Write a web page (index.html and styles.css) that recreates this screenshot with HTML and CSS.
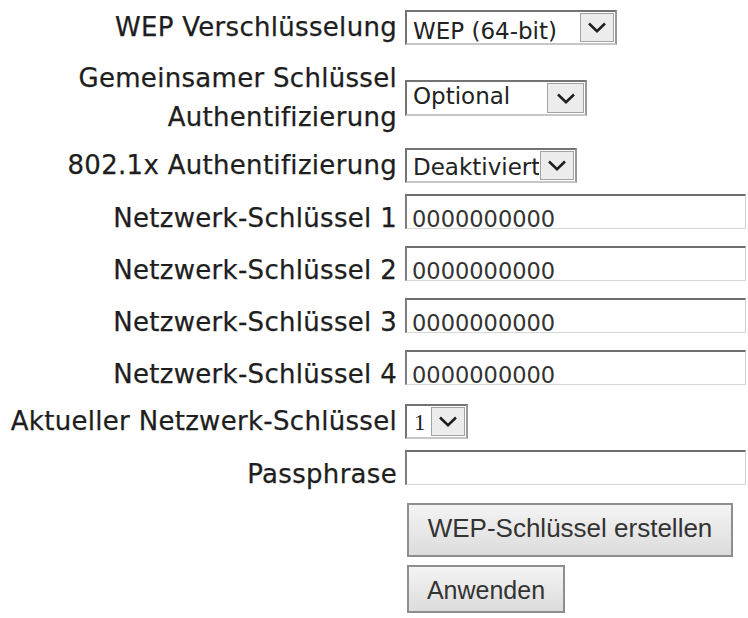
FILE: index.html
```html
<!DOCTYPE html>
<html lang="de">
<head>
<meta charset="utf-8">
<title>WEP</title>
<link rel="stylesheet" href="styles.css">
</head>
<body>
<form class="form">
  <div class="row">
    <label class="lbl">WEP Verschlüsselung</label>
    <div class="sel sel-enc"><span class="val val-enc">WEP (64-bit)</span><span class="arrow"><svg width="18" height="11" viewBox="0 0 18 11"><polyline points="1,1.5 9,9.2 17,1.5" fill="none" stroke="#1e1e1e" stroke-width="2.5"/></svg></span></div>
  </div>
  <div class="row row-tall">
    <label class="lbl">Gemeinsamer Schlüssel<br>Authentifizierung</label>
    <div class="sel sel-auth"><span class="val val-auth">Optional</span><span class="arrow arrow-wide"><svg width="18" height="11" viewBox="0 0 18 11"><polyline points="1,1.5 9,9.2 17,1.5" fill="none" stroke="#1e1e1e" stroke-width="2.5"/></svg></span></div>
  </div>
  <div class="row row-dot1x">
    <label class="lbl">802.1x Authentifizierung</label>
    <div class="sel sel-dot1x"><span class="val val-dot1x">Deaktiviert</span><span class="arrow"><svg width="18" height="11" viewBox="0 0 18 11"><polyline points="1,1.5 9,9.2 17,1.5" fill="none" stroke="#1e1e1e" stroke-width="2.5"/></svg></span></div>
  </div>
  <div class="row row-input row-first">
    <label class="lbl">Netzwerk-Schlüssel 1</label>
    <input class="txt" type="text" value="0000000000">
  </div>
  <div class="row row-input">
    <label class="lbl">Netzwerk-Schlüssel 2</label>
    <input class="txt" type="text" value="0000000000">
  </div>
  <div class="row row-input">
    <label class="lbl">Netzwerk-Schlüssel 3</label>
    <input class="txt" type="text" value="0000000000">
  </div>
  <div class="row row-input">
    <label class="lbl">Netzwerk-Schlüssel 4</label>
    <input class="txt" type="text" value="0000000000">
  </div>
  <div class="row">
    <label class="lbl">Aktueller Netzwerk-Schlüssel</label>
    <div class="sel sel-key"><span class="val val-key">1</span><span class="arrow"><svg width="18" height="11" viewBox="0 0 18 11"><polyline points="1,1.5 9,9.2 17,1.5" fill="none" stroke="#1e1e1e" stroke-width="2.5"/></svg></span></div>
  </div>
  <div class="row row-input row-pass">
    <label class="lbl">Passphrase</label>
    <input class="txt" type="text" value="">
  </div>
  <div class="row row-btn row-gen">
    <button class="btn btn-gen" type="button">WEP-Schlüssel erstellen</button>
  </div>
  <div class="row row-btn">
    <button class="btn btn-apply" type="button">Anwenden</button>
  </div>
</form>
</body>
</html>
```
FILE: styles.css
```css
html, body {
  margin: 0;
  padding: 0;
  background: #ffffff;
}

body {
  font-family: "DejaVu Sans", Verdana, sans-serif;
  color: #222222;
}

.form {
  display: flex;
  flex-direction: column;
  gap: 8px;
  padding-top: 8px;
  margin: 0;
}

.row {
  display: flex;
  align-items: center;
  gap: 8px;
}

.row-input {
  align-items: baseline;
}

.row-tall { margin-top: 4px; }
.row-dot1x { margin-top: 1px; }
.row-first { margin-top: 1px; }
.row-pass { margin-top: 1px; }
.row-gen { margin-top: 1px; }

.row-btn {
  padding-left: 405px;
}

.lbl {
  width: 397px;
  flex: none;
  text-align: right;
  font-size: 26px;
  line-height: 39px;
  letter-spacing: 0.3px;
  color: #1e1e1e;
  -webkit-text-stroke: 0.25px #1e1e1e;
  white-space: nowrap;
}

.sel {
  display: flex;
  align-items: stretch;
  flex: none;
  height: 35px;
  box-sizing: border-box;
  border-style: solid;
  border-width: 2px;
  border-color: #737373 #9a9a9a #c6c6c6 #737373;
  background: #ffffff;
}

.sel-enc { width: 212px; }
.sel-auth { width: 182px; height: 36px; }
.sel-dot1x { width: 172px; }
.sel-key { width: 63px; }

.val {
  flex: 1;
  padding: 6px 0 0 6px;
  font-size: 23px;
  line-height: 24px;
  color: #222222;
  white-space: nowrap;
  overflow: hidden;
}

.val-enc { padding-top: 7px; }
.val-auth { padding-top: 2px; }
.val-dot1x { padding-top: 5px; padding-left: 6px; }
.val-key {
  font-family: "Liberation Serif", "Times New Roman", serif;
  padding-left: 7px;
  padding-top: 5px;
}

.arrow {
  flex: none;
  width: 34px;
  box-sizing: border-box;
  margin: 1px;
  border: 1px solid #a2a2a2;
  background: #ececec;
  display: flex;
  align-items: center;
  justify-content: center;
}

.arrow-wide { width: 37px; }

.txt {
  width: 341px;
  height: 35px;
  box-sizing: border-box;
  margin: 0;
  border-style: solid;
  border-width: 2px 1px 1px 2px;
  border-color: #6e6e6e #d2d2d2 #d8d8d8 #7e7e7e;
  padding: 14px 0 0 5px;
  font-family: "DejaVu Sans", Verdana, sans-serif;
  font-size: 22.5px;
  line-height: 18px;
  color: #333333;
  background: #ffffff;
  outline: none;
  border-radius: 0;
}

.btn {
  box-sizing: border-box;
  margin: 0 0 0 2px;
  border: 2px solid #8e8e8e;
  border-radius: 0;
  background: linear-gradient(#f4f4f4, #dcdcdc);
  font-family: "Liberation Sans", Arial, sans-serif;
  color: #333333;
  padding: 0;
}

.btn-gen {
  width: 326px;
  height: 54px;
  font-size: 26px;
  padding-bottom: 4px;
}

.btn-apply {
  width: 158px;
  height: 48px;
  font-size: 25px;
  padding-top: 3px;
}
```
